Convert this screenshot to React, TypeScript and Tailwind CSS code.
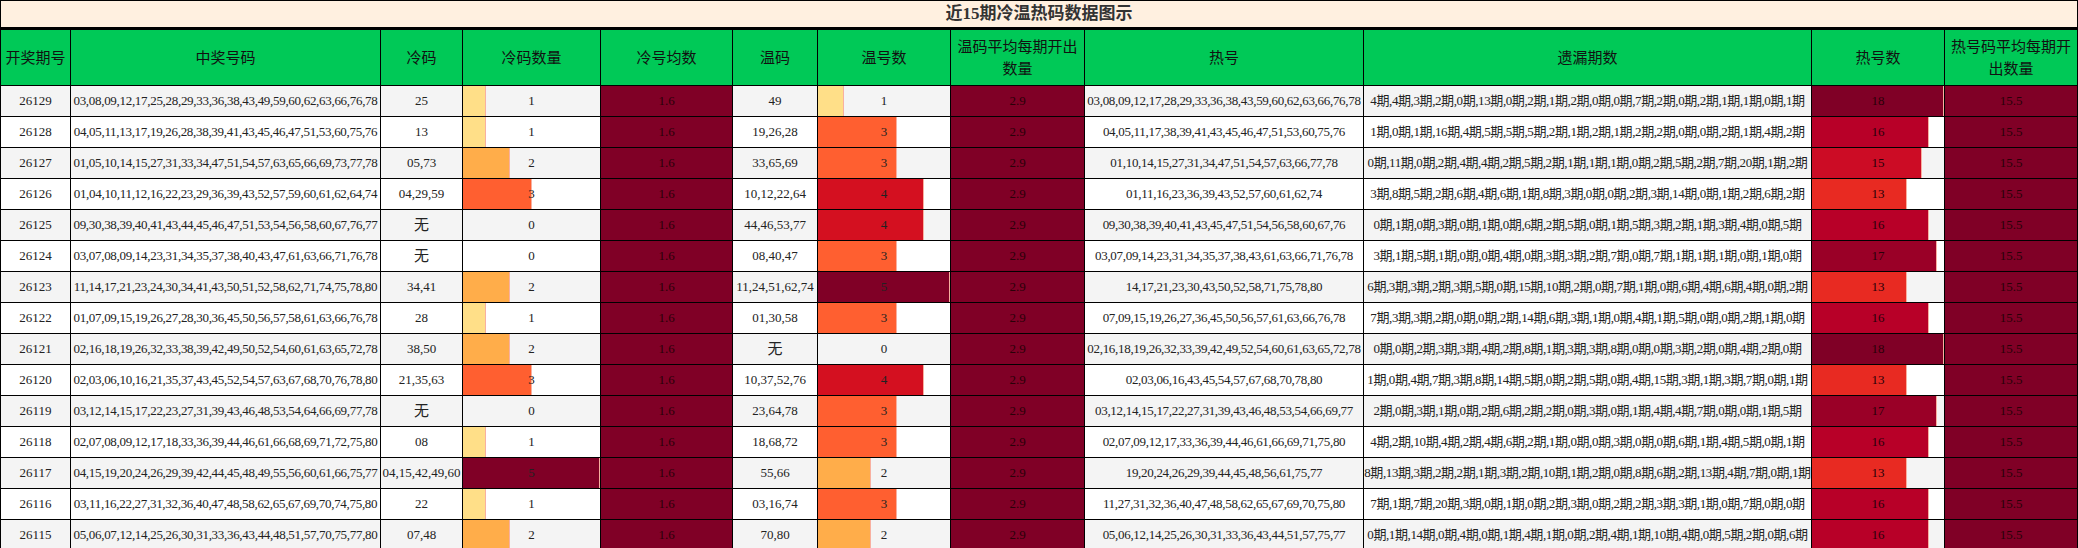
import React from 'react';

interface Row {
  issue: string;
  nums: string;
  cold: string;
  coldN: number;
  warm: string;
  warmN: number;
  hot: string;
  miss: string;
  hotN: number;
}

const rows: Row[] = [
  { issue: '26129', nums: '03,08,09,12,17,25,28,29,33,36,38,43,49,59,60,62,63,66,76,78', cold: '25', coldN: 1, warm: '49', warmN: 1, hot: '03,08,09,12,17,28,29,33,36,38,43,59,60,62,63,66,76,78', miss: '4期,4期,3期,2期,0期,13期,0期,2期,1期,2期,0期,0期,7期,2期,0期,2期,1期,1期,0期,1期', hotN: 18 },
  { issue: '26128', nums: '04,05,11,13,17,19,26,28,38,39,41,43,45,46,47,51,53,60,75,76', cold: '13', coldN: 1, warm: '19,26,28', warmN: 3, hot: '04,05,11,17,38,39,41,43,45,46,47,51,53,60,75,76', miss: '1期,0期,1期,16期,4期,5期,5期,5期,2期,1期,2期,1期,2期,2期,0期,0期,2期,1期,4期,2期', hotN: 16 },
  { issue: '26127', nums: '01,05,10,14,15,27,31,33,34,47,51,54,57,63,65,66,69,73,77,78', cold: '05,73', coldN: 2, warm: '33,65,69', warmN: 3, hot: '01,10,14,15,27,31,34,47,51,54,57,63,66,77,78', miss: '0期,11期,0期,2期,4期,4期,2期,5期,2期,1期,1期,1期,0期,2期,5期,2期,7期,20期,1期,2期', hotN: 15 },
  { issue: '26126', nums: '01,04,10,11,12,16,22,23,29,36,39,43,52,57,59,60,61,62,64,74', cold: '04,29,59', coldN: 3, warm: '10,12,22,64', warmN: 4, hot: '01,11,16,23,36,39,43,52,57,60,61,62,74', miss: '3期,8期,5期,2期,6期,4期,6期,1期,8期,3期,0期,0期,2期,3期,14期,0期,1期,2期,6期,2期', hotN: 13 },
  { issue: '26125', nums: '09,30,38,39,40,41,43,44,45,46,47,51,53,54,56,58,60,67,76,77', cold: '无', coldN: 0, warm: '44,46,53,77', warmN: 4, hot: '09,30,38,39,40,41,43,45,47,51,54,56,58,60,67,76', miss: '0期,1期,0期,3期,0期,1期,0期,6期,2期,5期,0期,1期,5期,3期,2期,1期,3期,4期,0期,5期', hotN: 16 },
  { issue: '26124', nums: '03,07,08,09,14,23,31,34,35,37,38,40,43,47,61,63,66,71,76,78', cold: '无', coldN: 0, warm: '08,40,47', warmN: 3, hot: '03,07,09,14,23,31,34,35,37,38,43,61,63,66,71,76,78', miss: '3期,1期,5期,1期,0期,0期,4期,0期,3期,3期,2期,7期,0期,7期,1期,1期,1期,0期,1期,0期', hotN: 17 },
  { issue: '26123', nums: '11,14,17,21,23,24,30,34,41,43,50,51,52,58,62,71,74,75,78,80', cold: '34,41', coldN: 2, warm: '11,24,51,62,74', warmN: 5, hot: '14,17,21,23,30,43,50,52,58,71,75,78,80', miss: '6期,3期,3期,2期,3期,5期,0期,15期,10期,2期,0期,7期,1期,0期,6期,4期,6期,4期,0期,2期', hotN: 13 },
  { issue: '26122', nums: '01,07,09,15,19,26,27,28,30,36,45,50,56,57,58,61,63,66,76,78', cold: '28', coldN: 1, warm: '01,30,58', warmN: 3, hot: '07,09,15,19,26,27,36,45,50,56,57,61,63,66,76,78', miss: '7期,3期,3期,2期,0期,0期,2期,14期,6期,3期,1期,0期,4期,1期,5期,0期,0期,2期,1期,0期', hotN: 16 },
  { issue: '26121', nums: '02,16,18,19,26,32,33,38,39,42,49,50,52,54,60,61,63,65,72,78', cold: '38,50', coldN: 2, warm: '无', warmN: 0, hot: '02,16,18,19,26,32,33,39,42,49,52,54,60,61,63,65,72,78', miss: '0期,0期,2期,3期,3期,4期,2期,8期,1期,3期,3期,8期,0期,0期,3期,2期,0期,4期,2期,0期', hotN: 18 },
  { issue: '26120', nums: '02,03,06,10,16,21,35,37,43,45,52,54,57,63,67,68,70,76,78,80', cold: '21,35,63', coldN: 3, warm: '10,37,52,76', warmN: 4, hot: '02,03,06,16,43,45,54,57,67,68,70,78,80', miss: '1期,0期,4期,7期,3期,8期,14期,5期,0期,2期,5期,0期,4期,15期,3期,1期,3期,7期,0期,1期', hotN: 13 },
  { issue: '26119', nums: '03,12,14,15,17,22,23,27,31,39,43,46,48,53,54,64,66,69,77,78', cold: '无', coldN: 0, warm: '23,64,78', warmN: 3, hot: '03,12,14,15,17,22,27,31,39,43,46,48,53,54,66,69,77', miss: '2期,0期,3期,1期,0期,2期,6期,2期,2期,0期,3期,0期,1期,4期,4期,7期,0期,0期,1期,5期', hotN: 17 },
  { issue: '26118', nums: '02,07,08,09,12,17,18,33,36,39,44,46,61,66,68,69,71,72,75,80', cold: '08', coldN: 1, warm: '18,68,72', warmN: 3, hot: '02,07,09,12,17,33,36,39,44,46,61,66,69,71,75,80', miss: '4期,2期,10期,4期,2期,4期,6期,2期,1期,0期,0期,3期,0期,0期,6期,1期,4期,5期,0期,1期', hotN: 16 },
  { issue: '26117', nums: '04,15,19,20,24,26,29,39,42,44,45,48,49,55,56,60,61,66,75,77', cold: '04,15,42,49,60', coldN: 5, warm: '55,66', warmN: 2, hot: '19,20,24,26,29,39,44,45,48,56,61,75,77', miss: '8期,13期,3期,2期,2期,1期,3期,2期,10期,1期,2期,0期,8期,6期,2期,13期,4期,7期,0期,1期', hotN: 13 },
  { issue: '26116', nums: '03,11,16,22,27,31,32,36,40,47,48,58,62,65,67,69,70,74,75,80', cold: '22', coldN: 1, warm: '03,16,74', warmN: 3, hot: '11,27,31,32,36,40,47,48,58,62,65,67,69,70,75,80', miss: '7期,1期,7期,20期,3期,0期,1期,0期,2期,3期,0期,2期,2期,3期,3期,1期,0期,7期,0期,0期', hotN: 16 },
  { issue: '26115', nums: '05,06,07,12,14,25,26,30,31,33,36,43,44,48,51,57,70,75,77,80', cold: '07,48', coldN: 2, warm: '70,80', warmN: 2, hot: '05,06,12,14,25,26,30,31,33,36,43,44,51,57,75,77', miss: '0期,1期,14期,0期,4期,0期,1期,4期,1期,0期,2期,4期,1期,10期,4期,0期,5期,2期,0期,6期', hotN: 16 },
];

const coldBar: Record<number, [number, string]> = {
  0: [0, '#ffdf88'],
  1: [17, '#ffdf88'],
  2: [34, '#ffad4a'],
  3: [50, '#ff5f30'],
  5: [100, '#800026'],
};
const warmBar: Record<number, string> = {
  0: '#ffdf88',
  1: '#ffdf88',
  2: '#ffad4a',
  3: '#ff5f30',
  4: '#d41020',
  5: '#800026',
};
const hotBar: Record<number, string> = {
  13: '#e82a22',
  15: '#cc0c25',
  16: '#b80028',
  17: '#9a0027',
  18: '#800026',
};

const cols = [70, 310, 82, 138, 132, 85, 133, 134, 279, 448, 133, 133];
const headers = ['开奖期号', '中奖号码', '冷码', '冷码数量', '冷号均数', '温码', '温号数', '温码平均每期开出数量', '热号', '遗漏期数', '热号数', '热号码平均每期开出数量'];

function Bar({ pct, color, label }: { pct: number; color: string; label: React.ReactNode }) {
  return (
    <td className="relative border border-black p-0 text-center">
      {pct > 0 && (
        <div
          className="absolute inset-y-0 left-0 border-r border-[#f8b0a0]"
          style={{ width: `${pct}%`, backgroundColor: color }}
        />
      )}
      <span className="relative">{label}</span>
    </td>
  );
}

export default function App() {
  const cell = 'border border-black text-center p-0';
  return (
    <div className="w-[2078px] bg-white" style={{ fontFamily: '"Liberation Serif", "Noto Sans CJK SC", serif' }}>
      <table className="w-[2078px] table-fixed border-collapse text-[13px] text-[#222]">
        <colgroup>
          {cols.map((w, i) => (
            <col key={i} style={{ width: w }} />
          ))}
        </colgroup>
        <thead>
          <tr className="h-[26px]">
            <th
              colSpan={12}
              className="border border-black border-b-[3px] bg-[#fff0e0] text-[17px] font-bold text-[#333]"
              style={{ fontFamily: '"Liberation Serif", "Noto Sans CJK SC", serif' }}
            >
              近15期冷温热码数据图示
            </th>
          </tr>
          <tr className="h-[57px] bg-[#00c957]">
            {headers.map((h) => (
              <th
                key={h}
                className="border border-black px-1 text-[15px] font-normal leading-[22px] text-[#111]"
                style={{ fontFamily: '"Noto Sans CJK SC", sans-serif' }}
              >
                {h}
              </th>
            ))}
          </tr>
        </thead>
        <tbody>
          {rows.map((r, i) => {
            const [cp, cc] = coldBar[r.coldN];
            return (
              <tr key={r.issue} className={`h-[31px] ${i % 2 === 0 ? 'bg-[#f4f4f4]' : 'bg-white'}`}>
                <td className={cell}>{r.issue}</td>
                <td className={`${cell} whitespace-nowrap tracking-[-0.3px]`}>{r.nums}</td>
                <td className={`${cell} whitespace-nowrap`}>{r.cold === '无' ? <span className="text-[15px]" style={{ fontFamily: '"Noto Sans CJK SC", sans-serif' }}>无</span> : r.cold}</td>
                <Bar pct={cp} color={cc} label={r.coldN} />
                <td className={`${cell} bg-[#800026] text-[#2a0008]`}>1.6</td>
                <td className={`${cell} whitespace-nowrap`}>{r.warm === '无' ? <span className="text-[15px]" style={{ fontFamily: '"Noto Sans CJK SC", sans-serif' }}>无</span> : r.warm}</td>
                <Bar pct={r.warmN * 20} color={warmBar[r.warmN]} label={r.warmN} />
                <td className={`${cell} bg-[#800026] text-[#2a0008]`}>2.9</td>
                <td className={`${cell} whitespace-nowrap tracking-[-0.3px]`}>{r.hot}</td>
                <td className={`${cell} whitespace-nowrap tracking-[-0.4px]`}>{r.miss}</td>
                <Bar pct={(r.hotN / 18) * 100} color={hotBar[r.hotN]} label={<span className="text-[#2a0008]">{r.hotN}</span>} />
                <td className={`${cell} bg-[#800026] text-[#2a0008]`}>15.5</td>
              </tr>
            );
          })}
        </tbody>
      </table>
    </div>
  );
}
